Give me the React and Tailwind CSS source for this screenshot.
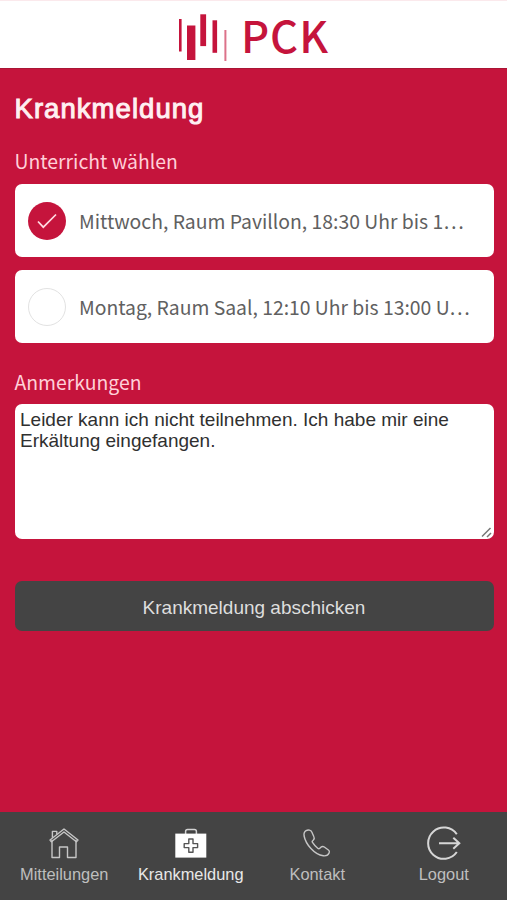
import { useState } from 'react';

const lessons = [
  { id: 1, label: 'Mittwoch, Raum Pavillon, 18:30 Uhr bis 1…' },
  { id: 2, label: 'Montag, Raum Saal, 12:10 Uhr bis 13:00 U…' },
];

function Logo() {
  return (
    <div className="flex items-start">
      <svg width="50" height="48" viewBox="0 0 50 48" fill="#c5143c">
        <rect x="1" y="5" width="2.6" height="32.5" />
        <rect x="9" y="11.5" width="8.4" height="34.5" />
        <rect x="22.3" y="0.3" width="5.8" height="31.8" />
        <rect x="34.5" y="6.3" width="4.6" height="32.5" />
        <rect x="46.4" y="16" width="2" height="31" opacity="0.6" />
      </svg>
      <span className="ml-[13px] text-[43.5px] leading-[42px] font-medium tracking-[1px] text-[#c5143c] font-['Noto_Sans_CJK_SC',sans-serif]">
        PCK
      </span>
    </div>
  );
}

function HomeIcon() {
  return (
    <svg width="34" height="36" viewBox="0 0 34 36" fill="none" stroke="#c6c6c6" strokeWidth="1.4" strokeLinejoin="round">
      <path d="M5 14.8V32.5h7.5V22h8v10.5H29V14.8" />
      <path d="M17 4 3 15l1.4 1.7L17 7l12.4 9.7L31 15z" />
      <path d="M5.4 12.8V6.4h4.4v3.1" />
    </svg>
  );
}

function MedkitIcon() {
  return (
    <svg width="34" height="36" viewBox="0 0 34 36" fill="none">
      <path d="M11.6 9V6.4c0-1.3.7-2 2-2h6.8c1.3 0 2 .7 2 2V9" stroke="#d4d4d4" strokeWidth="1.5" />
      <rect x="1.3" y="8.6" width="31" height="24" fill="#fff" />
      <path d="M14.8 14h4.2v4.6h4.6v4h-4.6v4.6h-4.2v-4.6h-4.6v-4h4.6z" stroke="#555" strokeWidth="1.4" strokeLinejoin="round" />
    </svg>
  );
}

function PhoneIcon() {
  return (
    <svg width="34" height="36" viewBox="0 0 34 36" fill="none" stroke="#c6c6c6" strokeWidth="1.4" strokeLinejoin="round">
      <path d="M6.1 5.6C4.2 6.7 3.7 8.6 4.1 11c.8 4 3.3 8.6 6.6 12.3 3.6 4 8.6 7 12.6 7.5 2.7.3 5.1-.9 5.9-3 .4-1.1.2-2.1-.8-2.8l-4.1-3c-1.1-.8-2.5-.6-3.5.3l-1.2 1.2c-.5.4-1.1.4-1.6 0-2.4-1.9-4.2-3.9-5.7-6.3-.3-.6-.2-1.1.3-1.5l.7-.6c1-.9 1.2-2.1.6-3.3l-2.2-5C11 5.1 8.2 4.4 6.1 5.6z" />
    </svg>
  );
}

function LogoutIcon() {
  return (
    <svg width="34" height="36" viewBox="0 0 34 36" fill="none" stroke="#d6d6d6" strokeWidth="2">
      <path d="M29.8 9.3A15.7 15.7 0 1 0 29.8 27" />
      <path d="M12 18.2h20M26.3 12.7l6 5.5-6 5.5" />
    </svg>
  );
}

const tabs = [
  { label: 'Mitteilungen', Icon: HomeIcon },
  { label: 'Krankmeldung', Icon: MedkitIcon, active: true },
  { label: 'Kontakt', Icon: PhoneIcon },
  { label: 'Logout', Icon: LogoutIcon },
];

function LessonRow({ label, checked, onClick }) {
  return (
    <button
      type="button"
      onClick={onClick}
      className="flex h-[73px] w-full items-center rounded-[7px] bg-white pl-[13px] text-left"
    >
      <span
        className={
          checked
            ? 'flex size-[38px] shrink-0 items-center justify-center rounded-full bg-[#c5143c]'
            : 'size-[38px] shrink-0 rounded-full border border-[#e2e2e2] bg-white'
        }
      >
        {checked && (
          <svg width="20" height="16" viewBox="0 0 20 16" fill="none" stroke="#ffdbe2" strokeWidth="1.7">
            <path d="M1 8.5l5.3 5.7L19 1.5" />
          </svg>
        )}
      </span>
      <span className="ml-[13.5px] whitespace-nowrap pt-px text-[19.35px] leading-7 text-[#606060] font-['Noto_Sans_CJK_SC',sans-serif]">
        {label}
      </span>
    </button>
  );
}

export default function App() {
  const [selected, setSelected] = useState(1);
  const [note, setNote] = useState(
    'Leider kann ich nicht teilnehmen. Ich habe mir eine Erkältung eingefangen.'
  );

  return (
    <div className="flex h-[900px] w-[507px] flex-col overflow-hidden bg-[#c5143c] font-['Liberation_Sans',Arial,sans-serif]">
      <header className="flex h-[69px] shrink-0 justify-center border-t border-b border-t-[#fbe9ec] border-b-[#a91535] bg-white pt-[13px]">
        <Logo />
      </header>

      <main className="flex flex-1 flex-col pr-[13.5px] pl-[14.5px] pt-[24px]">
        <h1 className="text-[27.5px] leading-8 tracking-[1.05px] text-[#fff0f2] [-webkit-text-stroke:1px_#fff0f2]">Krankmeldung</h1>

        <h2 className="mt-[22px] text-[19.4px] leading-7 text-[#ffd0d9] font-['Noto_Sans_CJK_SC',sans-serif]">
          Unterricht wählen
        </h2>
        <div className="mt-[9px] flex flex-col gap-[13px]">
          {lessons.map((lesson) => (
            <LessonRow
              key={lesson.id}
              label={lesson.label}
              checked={selected === lesson.id}
              onClick={() => setSelected(lesson.id)}
            />
          ))}
        </div>

        <h2 className="mt-[25px] text-[19.4px] leading-7 text-[#ffd0d9] font-['Noto_Sans_CJK_SC',sans-serif]">
          Anmerkungen
        </h2>
        <div className="relative mt-[8px] h-[135px]">
          <textarea
            value={note}
            onChange={(e) => setNote(e.target.value)}
            className="block h-full w-full resize-none rounded-[7px] bg-white px-[5.5px] py-[5px] text-[19px] leading-[21px] text-[#303030] outline-none"
          />
          <svg className="absolute right-[2px] bottom-[1px]" width="11" height="11" viewBox="0 0 11 11" stroke="#777" strokeWidth="1.5">
            <path d="M1 9.500 9.5 1M6 10l4-4" />
          </svg>
        </div>

        <button
          type="button"
          className="mt-[42px] h-[50px] w-full rounded-[7px] bg-[#444] pt-[4px] text-[19px] text-[#dedede]"
        >
          Krankmeldung abschicken
        </button>
      </main>

      <nav className="grid h-[88px] shrink-0 grid-cols-4 bg-[#444] pt-[13px] pl-px">
        {tabs.map(({ label, Icon, active }) => (
          <a key={label} className="flex flex-col items-center">
            <Icon />
            <span className={active ? 'mt-[3px] text-[16.4px] leading-5 text-[#e8e8e8]' : 'mt-[3px] text-[16.4px] leading-5 text-[#bebebe]'}>
              {label}
            </span>
          </a>
        ))}
      </nav>
    </div>
  );
}
